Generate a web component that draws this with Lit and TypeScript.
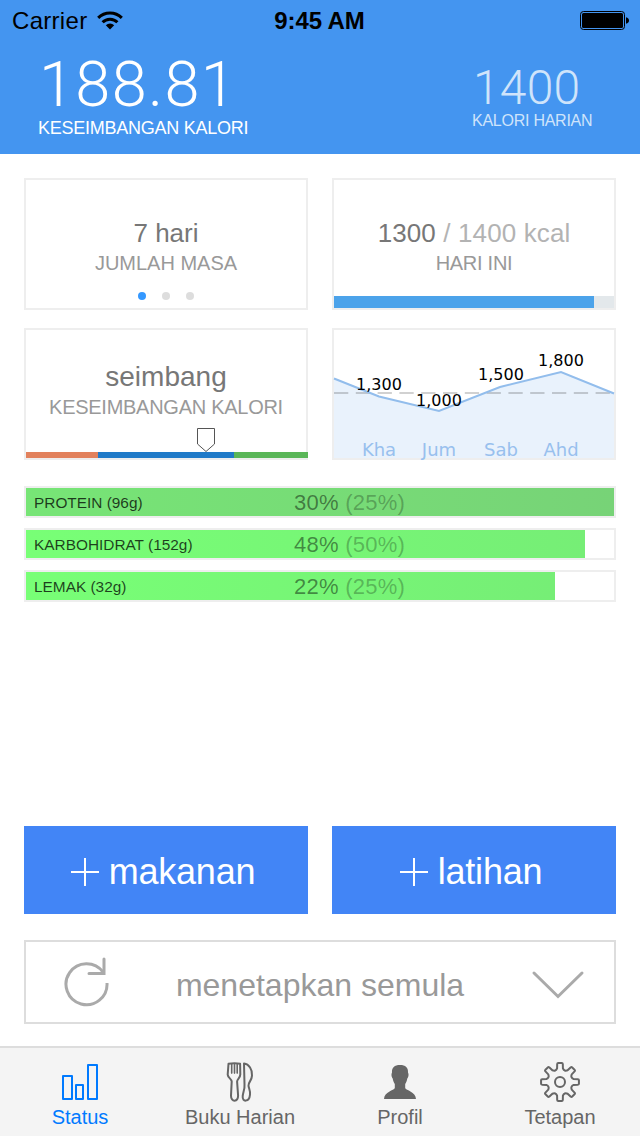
import { LitElement, html, css, svg } from "lit";
import { customElement, property } from "lit/decorators.js";
import { styleMap } from "lit/directives/style-map.js";

interface Macro {
  name: string;
  share: string;
  target: string;
  fill: number;
  full?: boolean;
}

const macros: Macro[] = [
  { name: "PROTEIN (96g)", share: "30%", target: "(25%)", fill: 588, full: true },
  { name: "KARBOHIDRAT (152g)", share: "48%", target: "(50%)", fill: 559 },
  { name: "LEMAK (32g)", share: "22%", target: "(25%)", fill: 529 },
];

@customElement("macro-bar")
export class MacroBar extends LitElement {
  @property({ attribute: false }) macro!: Macro;

  static styles = css`
    :host { display: block; }
    .bar { box-sizing: border-box; height: 32px; border: 2px solid #eee; display: grid; grid-template-rows: 28px; background: #fff; }
    .fill, .labels { grid-area: 1 / 1; }
    .fill { background: linear-gradient(90deg, #78ff76, #76ee76); }
    .fill.full { background: linear-gradient(90deg, #77e576, #77d377); }
    .labels { display: grid; grid-template-columns: 260px auto; line-height: 28px; padding-left: 8px; white-space: pre; }
    .name { font-size: 15.4px; color: rgba(0, 0, 0, 0.75); padding-top: 1px; letter-spacing: 0; line-height: 27px; }
    .share { font-size: 22px; color: rgba(0, 0, 0, 0.45); padding-top: 1px; letter-spacing: 0.25px; line-height: 27px; }
    .target { color: rgba(0, 0, 0, 0.27); }
  `;

  render() {
    const m = this.macro;
    return html`<div class="bar">
      <div class="fill ${m.full ? "full" : ""}" style=${styleMap({ width: `${m.fill}px` })}></div>
      <div class="labels">
        <span class="name">${m.name}</span>
        <span class="share">${m.share} <span class="target">${m.target}</span></span>
      </div>
    </div>`;
  }
}

const gearPath = (() => {
  const pts: string[] = [];
  const at = (r: number, deg: number) => {
    const a = (deg * Math.PI) / 180;
    return `${(20 + r * Math.sin(a)).toFixed(2)} ${(20 - r * Math.cos(a)).toFixed(2)}`;
  };
  for (let i = 0; i < 8; i++) {
    const c = i * 45;
    pts.push(`${i ? "L" : "M"}${at(14, c - 12)} L${at(18, c - 9)} Q${at(19.2, c - 8)} ${at(19, c - 5)} L${at(19, c + 5)} Q${at(19.2, c + 8)} ${at(18, c + 9)} L${at(14, c + 12)} Q${at(11.2, c + 22.5)} ${at(14, c + 33)}`);
  }
  return pts.join(" ") + "Z";
})();

const icons = {
  status: svg`<g fill="none" stroke="#007aff" stroke-width="2" stroke-linejoin="round">
    <rect x="3" y="14" width="9" height="23"/><rect x="16" y="23" width="7" height="14"/><rect x="28" y="3" width="9" height="34"/></g>`,
  food: svg`<g transform="translate(-.5 -1.4)" fill="none" stroke="#666" stroke-width="2" stroke-linejoin="round" stroke-linecap="round">
    <path d="M9 3.2C12 2.6 18 2.6 20.6 3.2L20.8 14C20.8 17.5 17.5 18.3 17.6 21L18.6 35C18.6 41.8 11.4 41.8 11.5 35L12.2 21C12.2 18 8.4 17.5 8.2 14Z"/>
    <path d="M12.2 4V12.5M15 4V12.5M17.7 4V12.5" stroke-width="1.6"/>
    <path d="M24.5 3C29.5 3.5 33 9 32.5 15C32.3 20 28.8 21.5 29 25C29.3 28 31 30 30.5 34C29.8 41.5 22.5 42 23.2 35.5C23.5 32 25.5 28 25 24Z"/></g>`,
  profile: svg`<path transform="translate(0 -2)" fill="#666" d="M20 5C25.5 5 28.3 7.5 28 12.5L28.5 14C28.7 16 28 18 27.3 18.5C26.9 21 26 23 25.2 24V28C26 30.5 35.7 31.5 36 39H4C4.3 31.5 14 30.5 14.8 28V24C14 23 13.1 21 12.7 18.5C12 18 11.3 16 11.5 14L12 12.5C11.7 7.5 14.5 5 20 5Z"/>`,
  settings: svg`<g fill="none" stroke="#666" stroke-width="2" stroke-linejoin="round"><path d=${gearPath}/><circle cx="20" cy="20" r="5"/></g>`,
};

const tabs = [
  { label: "Status", icon: icons.status, cls: "active" },
  { label: "Buku Harian", icon: icons.food, cls: "" },
  { label: "Profil", icon: icons.profile, cls: "" },
  { label: "Tetapan", icon: icons.settings, cls: "" },
];

const chartPoints = [
  { x: 45, label: "1,300", ly: 60, day: "Kha" },
  { x: 105, label: "1,000", ly: 76, day: "Jum" },
  { x: 167, label: "1,500", ly: 50, day: "Sab" },
  { x: 227, label: "1,800", ly: 36, day: "Ahd" },
];

@customElement("app-root")
export class AppRoot extends LitElement {
  static styles = css`
    :host { display: flex; flex-direction: column; width: 640px; height: 1136px; background: #fff; overflow: hidden; font-family: "Liberation Sans", Arial, sans-serif; }
    * { box-sizing: border-box; }
    svg { display: block; }
    header { height: 154px; background: #4495f0; flex: none; }
    .statusbar { height: 42px; display: grid; grid-template-columns: 1fr auto 1fr; align-items: center; font-size: 24px; line-height: 40px; padding: 0 10px 0 12px; color: #000; }
    .carrier { display: flex; align-items: center; gap: 10px; letter-spacing: 0.3px; }
    .clock { font-weight: bold; letter-spacing: -0.1px; margin-right: 3px; }
    .battery { justify-self: end; margin-bottom: 1px; }
    .summary { display: flex; justify-content: space-between; padding: 9px 47px 0 38px; color: #fff; }
    .balance, .goal { font-family: Roboto, "Liberation Sans", sans-serif; font-weight: 300; }
    .balance { font-size: 63px; line-height: 68px; height: 66px; letter-spacing: 1.4px; padding-left: 1px; }
    .balance-label { font-size: 18px; line-height: 22px; letter-spacing: -0.25px; }
    .daily { padding-top: 12px; color: #cfe4fb; width: 121px; }
    .goal { font-size: 48px; line-height: 50px; letter-spacing: 0.2px; padding-left: 1px; }
    .goal-label { font-size: 16px; line-height: 16px; letter-spacing: -0.25px; white-space: nowrap; }
    main { flex: 1; display: flex; flex-direction: column; padding: 24px 24px 0; }
    .cards { display: grid; grid-template-columns: 284px 284px; grid-auto-rows: 132px; column-gap: 24px; row-gap: 18px; }
    .card { border: 2px solid #eee; text-align: center; display: flex; flex-direction: column; color: #777; white-space: pre; }
    .value { font-size: 26px; line-height: 30px; margin-top: 38px; letter-spacing: 0; }
    .kcal { letter-spacing: 0.12px; }
    .mood { font-size: 28px; margin-top: 31px; line-height: 32px; }
    .caption { font-size: 20px; line-height: 24px; color: #999; margin-top: 3px; }
    .caption.tight { letter-spacing: -0.27px; }
    .mood + .caption { margin-top: 2px; }
    .limit { color: #b3b3b3; }
    .dots { display: flex; justify-content: center; gap: 16px; margin-top: 17px; }
    .dot { width: 8px; height: 8px; border-radius: 50%; background: #ddd; }
    .dot.on { background: #3498ff; }
    .progress { margin-top: auto; height: 12px; background: #e3e8eb; }
    .progress-fill { height: 12px; background: #4ca3ea; }
    .scale { margin-top: auto; width: 282px; flex: none; }
    .chart svg { overflow: visible; }
    .chart text { font-family: "DejaVu Sans", Verdana, sans-serif; text-anchor: middle; }
    .point { font-size: 16px; fill: #000; }
    .day { font-size: 18px; fill: #98c0ee; }
    .macros { display: grid; gap: 10px; margin-top: 26px; }
    .actions { display: grid; grid-template-columns: 284px 284px; gap: 24px; margin-top: auto; }
    button { font: inherit; border-radius: 0; padding: 0; margin: 0; }
    .add { height: 88px; border: 0; background: #4285f6; color: #fff; font-size: 36px; letter-spacing: -0.2px; display: flex; justify-content: center; align-items: center; gap: 9px; padding: 4px 7px 0 0; }
    .reset { height: 84px; margin: 26px 0 22px; border: 2px solid #ddd; background: #fff; color: #999; font-size: 32px; display: grid; grid-template-columns: 120px 1fr 120px; align-items: center; justify-items: center; flex: none; }
    .reset-label { padding-top: 7px; }
    .chevron { margin: 5px 0 0 7px; }
    nav { height: 90px; flex: none; border-top: 2px solid #ddd; background: #f4f4f4; display: grid; grid-template-columns: repeat(4, 1fr); }
    .tab { display: flex; flex-direction: column; align-items: center; padding-top: 14px; font-size: 20px; line-height: 24px; color: #666; }
    .tab span { margin-top: 1px; }
    .tab.active { color: #007aff; }
  `;

  render() {
    const plus = html`<svg width="30" height="30" viewBox="0 0 30 30"><path d="M15 1V29M1 15H29" stroke="#fff" stroke-width="2"/></svg>`;
    return html`
      <header>
        <div class="statusbar">
          <div class="carrier"><span>Carrier</span>
            <svg width="26" height="20" viewBox="0 0 26 20"><g fill="none" stroke="#000" stroke-width="3"><path d="M1.2 6.9A16.5 16.5 0 0 1 24.8 6.9"/><path d="M5.6 11.3A10.4 10.4 0 0 1 20.4 11.3"/></g><path d="M13 18.5L8.8 14.3A6 6 0 0 1 17.2 14.3Z"/></svg>
          </div>
          <span class="clock">9:45 AM</span>
          <svg class="battery" width="50" height="20" viewBox="0 0 50 20"><rect x=".5" y=".5" width="44" height="18" rx="3" fill="none" stroke="#000"/><rect x="2" y="2" width="41" height="15" rx="1.5"/><path d="M46 6.2Q49 7 49 9.5Q49 12 46 12.8Z"/></svg>
        </div>
        <div class="summary">
          <div><div class="balance">188.81</div><div class="balance-label">KESEIMBANGAN KALORI</div></div>
          <div class="daily"><div class="goal">1400</div><div class="goal-label">KALORI HARIAN</div></div>
        </div>
      </header>
      <main>
        <div class="cards">
          <div class="card"><div class="value">7 hari</div><div class="caption">JUMLAH MASA</div><div class="dots"><i class="dot on"></i><i class="dot"></i><i class="dot"></i></div></div>
          <div class="card"><div class="value kcal">1300<span class="limit"> / 1400 kcal</span></div><div class="caption tight">HARI INI</div><div class="progress"><div class="progress-fill" style=${styleMap({ width: "260px" })}></div></div></div>
          <div class="card"><div class="value mood">seimbang</div><div class="caption tight">KESEIMBANGAN KALORI</div>
            <svg class="scale" width="282" height="31" viewBox="0 0 282 31"><path d="M0 25H72V31H0Z" fill="#e2815c"/><path d="M72 25H208V31H72Z" fill="#207ac8"/><path d="M208 25H282V31H208Z" fill="#5ab658"/><path d="M171.5 1.5H188.5V17L180 24.5L171.5 17Z" fill="#fff" stroke="#555"/></svg>
          </div>
          <div class="card chart"><svg width="280" height="128" viewBox="0 0 280 128">
            <path d="M0 48.5L45 66.5L105 81L166 57L227 42L280 63.5V128H0Z" fill="#e9f2fc"/>
            <path d="M0 63H280" stroke="#000" stroke-opacity=".18" stroke-width="2" stroke-dasharray="14.3 7.5"/>
            <path d="M0 48.5L45 66.5L105 81L166 57L227 42L280 63.5" fill="none" stroke="#92bdec" stroke-width="2"/>
            ${chartPoints.map((p) => svg`<text class="point" x=${p.x} y=${p.ly}>${p.label}</text><text class="day" x=${p.x} y="126">${p.day}</text>`)}
          </svg></div>
        </div>
        <div class="macros">${macros.map((m) => html`<macro-bar .macro=${m}></macro-bar>`)}</div>
        <div class="actions"><button class="add">${plus}<span>makanan</span></button><button class="add">${plus}<span>latihan</span></button></div>
        <button class="reset">
          <svg width="50" height="50" viewBox="0 0 50 50" fill="none" stroke="#aaa" stroke-width="3" stroke-linecap="round" stroke-linejoin="miter"><path d="M46 26A20.5 20.5 0 1 1 42 15" stroke-linecap="butt"/><path d="M43 2V16.5H28"/></svg>
          <span class="reset-label">menetapkan semula</span>
          <svg class="chevron" width="54" height="30" viewBox="0 0 54 30" fill="none" stroke="#aaa" stroke-width="3" stroke-linecap="round"><path d="M3 3L27 26.5L51 3"/></svg>
        </button>
      </main>
      <nav>${tabs.map((t) => html`<div class="tab ${t.cls}"><svg width="40" height="42" viewBox="0 0 40 42">${t.icon}</svg><span>${t.label}</span></div>`)}</nav>
    `;
  }
}
